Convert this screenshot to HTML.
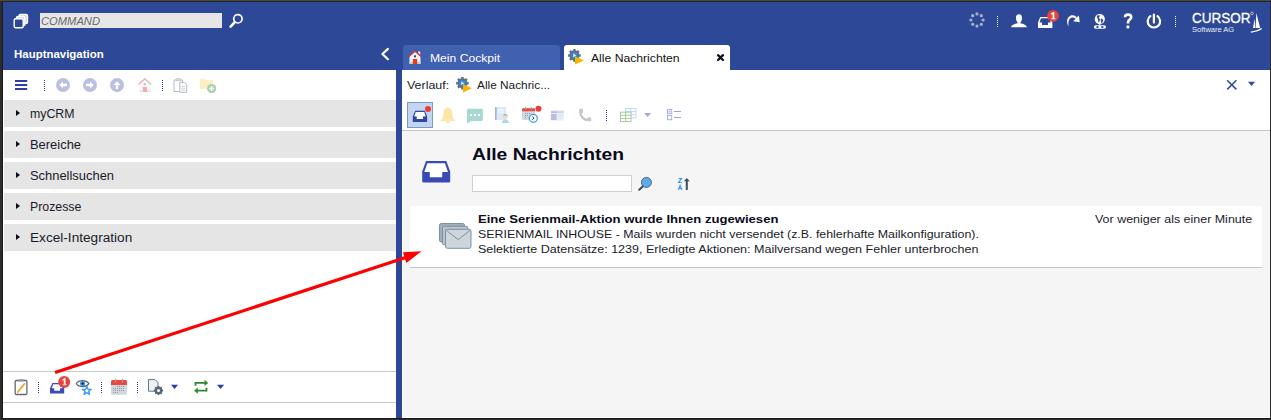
<!DOCTYPE html>
<html><head><meta charset="utf-8">
<style>
*{margin:0;padding:0;box-sizing:border-box}
html,body{width:1271px;height:420px;overflow:hidden;background:#2c2c2c;font-family:"Liberation Sans",sans-serif}
.a{position:absolute}
.t{position:absolute;white-space:nowrap;line-height:1;transform-origin:0 0}
#top0{left:0;top:0;width:1271px;height:1px;background:#4a4a4a}
#blue{left:3px;top:2px;width:1267px;height:416px;background:#2e4898}
#lp{left:3px;top:70px;width:393px;height:348px;background:#fff}
#rp{left:402px;top:70px;width:868px;height:348px;background:#f5f5f5;border-left:1px solid #fff;border-bottom:1px solid #fff}
.row{position:absolute;left:4px;width:392px;height:27px;background:#e5e5e5}
.row .tri{position:absolute;left:12px;top:9.6px;width:0;height:0;border-top:3.9px solid transparent;border-bottom:3.9px solid transparent;border-left:4.8px solid #0a0a1a}
.nv{font-size:12.5px;color:#1a1a2a;left:30px}
.ct{font-size:11px;color:#1a1a2a}
</style></head>
<body>
<div id="top0" class="a"></div>
<div class="a" style="left:2px;top:1px;width:1px;height:418px;background:#1b1b1b"></div>
<div class="a" style="left:2px;top:418px;width:1269px;height:1px;background:#1b1b1b"></div>
<div class="a" style="left:2px;top:1px;width:1269px;height:1px;background:#252520"></div>
<div id="blue" class="a"></div>

<!-- command box -->
<div class="a" style="left:40px;top:13px;width:182px;height:15px;background:#e6e6e6"></div>
<div class="t" style="left:41px;top:16px;font-size:11.5px;font-style:italic;color:#6a6a6a;transform:scaleX(0.972)">COMMAND</div>

<div class="t" style="left:13.5px;top:48.5px;font-size:11px;font-weight:bold;color:#fff;transform:scaleX(1.041)">Hauptnavigation</div>

<!-- left panel -->
<div id="lp" class="a"></div>
<div class="row" style="top:100px"><div class="tri"></div></div>
<div class="row" style="top:131px"><div class="tri"></div></div>
<div class="row" style="top:162px"><div class="tri"></div></div>
<div class="row" style="top:193px"><div class="tri"></div></div>
<div class="row" style="top:224px"><div class="tri"></div></div>
<div class="t nv" style="top:108.2px;transform:scaleX(0.986)">myCRM</div>
<div class="t nv" style="top:139.2px;transform:scaleX(1.034)">Bereiche</div>
<div class="t nv" style="top:170.2px;transform:scaleX(1.033)">Schnellsuchen</div>
<div class="t nv" style="top:201.2px;transform:scaleX(0.986)">Prozesse</div>
<div class="t nv" style="top:232.2px;transform:scaleX(1.090)">Excel-Integration</div>
<div class="a" style="left:3px;top:371px;width:393px;height:1px;background:#c8c8c8"></div>
<div class="a" style="left:3px;top:402px;width:393px;height:1px;background:#c8c8c8"></div>

<!-- tabs -->
<div class="a" style="left:403px;top:45px;width:157px;height:25px;background:#4060b0;border-radius:3px 3px 0 0"></div>
<div class="t" style="left:429.7px;top:53.2px;font-size:11px;color:#fff;transform:scaleX(1.104)">Mein Cockpit</div>
<div class="a" style="left:564px;top:45px;width:166px;height:26px;background:#fff;border-radius:3px 3px 0 0"></div>
<div class="t ct" style="left:590.7px;top:52.7px;color:#111;transform:scaleX(1.106)">Alle Nachrichten</div>

<!-- right panel -->
<div id="rp" class="a"></div>
<div class="a" style="left:402px;top:70px;width:868px;height:61px;background:#fff"></div>
<div class="a" style="left:402px;top:130px;width:868px;height:1px;background:#c8c8c8"></div>
<div class="t ct" style="left:407.4px;top:80px;font-size:11.5px;transform:scaleX(1.082)">Verlauf:</div>
<div class="t ct" style="left:477px;top:80px;font-size:11.5px;transform:scaleX(1.029)">Alle Nachric...</div>

<div class="t" style="left:472.4px;top:145.8px;font-size:16.5px;font-weight:bold;color:#0a0a1a;transform:scaleX(1.167)">Alle Nachrichten</div>
<div class="a" style="left:472px;top:175px;width:160px;height:17px;background:#fff;border:1px solid #d0d0d0"></div>

<!-- card -->
<div class="a" style="left:410px;top:206px;width:852px;height:62px;background:#fff;border-bottom:1px solid #c4c4c4"></div>
<div class="t ct" style="left:477.7px;top:213.6px;font-weight:bold;color:#0a0a1a;transform:scaleX(1.190)">Eine Serienmail-Aktion wurde Ihnen zugewiesen</div>
<div class="t ct" style="left:477.7px;top:228.5px;transform:scaleX(1.125)">SERIENMAIL INHOUSE - Mails wurden nicht versendet (z.B. fehlerhafte Mailkonfiguration).</div>
<div class="t ct" style="left:477.7px;top:243.5px;transform:scaleX(1.140)">Selektierte Datensätze: 1239, Erledigte Aktionen: Mailversand wegen Fehler unterbrochen</div>
<div class="t ct" style="left:1094.6px;top:213.7px;transform:scaleX(1.132)">Vor weniger als einer Minute</div>

<!-- ICONS -->

<svg class="a" style="left:0;top:0" width="1271" height="420" viewBox="0 0 1271 420">
<!-- header: window stack -->
<g stroke="#fff" stroke-width="1.4" stroke-linejoin="round">
<rect x="19" y="14.5" width="8.5" height="9" rx="1.5" fill="#c9cee8"/>
<rect x="16.5" y="16.5" width="8.5" height="9" rx="1.5" fill="#c9cee8"/>
<rect x="14.2" y="18.7" width="9" height="9" rx="1.5" fill="#2e4898"/>
</g>
<!-- header: magnifier -->
<circle cx="237.9" cy="18.8" r="4.2" fill="none" stroke="#fff" stroke-width="1.7"/>
<line x1="234.6" y1="22.3" x2="230.6" y2="26.6" stroke="#fff" stroke-width="2.6" stroke-linecap="round"/>
<!-- spinner -->
<g fill="#aab0c8">
<circle cx="977" cy="13.9" r="1.6"/><circle cx="981.3" cy="15.7" r="1.6"/><circle cx="983.1" cy="20" r="1.6"/><circle cx="981.3" cy="24.3" r="1.6"/>
<circle cx="977" cy="26.1" r="1.6"/><circle cx="972.7" cy="24.3" r="1.6"/><circle cx="970.9" cy="20" r="1.6"/><circle cx="972.7" cy="15.7" r="1.6"/>
</g>
<!-- dotted separators header -->
<g fill="#fff">
<rect x="997" y="16" width="1" height="1"/><rect x="997" y="18" width="1" height="1"/><rect x="997" y="20" width="1" height="1"/><rect x="997" y="22" width="1" height="1"/><rect x="997" y="24" width="1" height="1"/><rect x="997" y="26" width="1" height="1"/>
<rect x="1175" y="16" width="1" height="1"/><rect x="1175" y="18" width="1" height="1"/><rect x="1175" y="20" width="1" height="1"/><rect x="1175" y="22" width="1" height="1"/><rect x="1175" y="24" width="1" height="1"/><rect x="1175" y="26" width="1" height="1"/>
</g>
<!-- person -->
<path fill="#fff" d="M1019,14.2 C1021.2,14.2 1022.1,16 1022,18.2 C1021.9,20.3 1021,21.8 1020.3,22.6 L1020.4,23.3 C1023.5,24 1026.7,25 1026.8,27.3 L1011.1,27.3 C1011.3,25 1014.5,24 1017.6,23.3 L1017.7,22.6 C1017,21.8 1016.1,20.3 1016,18.2 C1015.9,16 1016.8,14.2 1019,14.2 Z"/>
<!-- inbox header -->
<path fill="#fff" d="M1040.2,17 L1050,17 L1052.4,22.5 L1052.4,28 L1038,28 L1038,22.5 Z M1041,18.3 L1039.5,22.5 L1042,22.5 L1042,25 L1048,25 L1048,22.5 L1050.8,22.5 L1049.2,18.3 Z" fill-rule="evenodd"/>
<circle cx="1053" cy="15.9" r="5.9" fill="#e8433a"/>
<path fill="#fff" d="M1051.2,13.2 L1053.6,12 L1054.3,12 L1054.3,18.2 L1055.4,18.2 L1055.4,19.3 L1051.4,19.3 L1051.4,18.2 L1052.6,18.2 L1052.6,14.2 L1051.2,14.7 Z"/>
<!-- redo arrow -->
<path fill="#fff" d="M1068.6,26.4 C1066.4,23 1066.2,17.6 1070.8,15.6 C1073.2,14.8 1075.4,15.6 1076.8,17.4 L1075.4,18.8 C1074.4,17.6 1072.8,17.2 1071.4,17.7 C1068.4,18.8 1068.2,22.6 1068.6,26.4 Z"/>
<path fill="#fff" d="M1078.8,15.6 L1079.8,22.2 L1073.2,21.2 Z"/>
<!-- globe -->
<circle cx="1099.8" cy="19.1" r="5.1" fill="#fff"/>
<path fill="#2e4898" d="M1097.6,15.3 C1096.3,16.4 1096.9,17.6 1097.6,18.4 C1098.2,19.2 1097.9,20.6 1098.4,22 L1099,22.6 C1099.2,21.4 1099.9,20.6 1100.1,19.6 C1100.2,18.8 1099.1,18.7 1098.8,17.8 C1099.2,17 1099.9,16.4 1099.6,15.2 Z"/>
<path fill="#2e4898" d="M1101.2,18.4 C1102.2,18.6 1103.4,19.2 1103.2,20.4 C1103,21.4 1102.4,22.2 1101.8,23.2 L1101.2,23.4 C1101.4,22.2 1100.9,21.4 1100.8,20.5 C1100.7,19.6 1100.9,18.9 1101.2,18.4 Z"/>
<rect x="1099.3" y="24" width="1" height="1.5" fill="#fff"/>
<rect x="1093.9" y="25.3" width="12.1" height="3.4" rx="1.7" fill="#fff"/>
<path fill="#2e4898" d="M1095.8,27 L1097.2,26.1 L1098.4,26.1 L1098.4,27.9 L1097.2,27.9 Z M1104,27 L1102.6,26.1 L1101.4,26.1 L1101.4,27.9 L1102.6,27.9 Z"/>
<!-- question -->
<path fill="none" stroke="#fff" stroke-width="2.6" d="M1125,17.2 C1125,15.2 1126.3,14.6 1128,14.6 C1130,14.6 1131.2,15.6 1131.2,17.3 C1131.2,19.5 1128,19.8 1128,22.2 L1128,23.6"/>
<circle cx="1127.9" cy="26.9" r="1.6" fill="#fff"/>
<!-- power -->
<path fill="none" stroke="#fff" stroke-width="2.2" stroke-linecap="round" d="M1150.34,16.2 A6.2,6.2 0 1 0 1157.46,16.2"/>
<line x1="1153.9" y1="14.6" x2="1153.9" y2="22.6" stroke="#fff" stroke-width="2.2" stroke-linecap="round"/>
<!-- sailboat -->
<path fill="#fff" d="M1256.3,13 L1260.2,28 L1255.6,28 Z M1254.6,18.5 L1255.2,28 L1253,28 Z"/>
<path fill="none" stroke="#fff" stroke-width="1.3" d="M1250.8,32.2 C1255,31.5 1259,30.5 1261.7,28.5"/>
<circle cx="1252" cy="13.4" r="1.3" fill="none" stroke="#fff" stroke-width="0.6"/>
<!-- chevron -->
<path fill="none" stroke="#fff" stroke-width="2.2" stroke-linecap="round" stroke-linejoin="round" d="M387.9,48.9 L382.4,54 L387.9,59.2"/>
<!-- house tab -->
<rect x="418" y="51.5" width="2.2" height="4" fill="#e8eaf4"/>
<path fill="#f4f5fa" d="M409.5,56.5 L415,51.5 L420.5,56.5 L420.5,63.8 L409.5,63.8 Z"/>
<rect x="409.5" y="61.8" width="11" height="2" fill="#c9cde6"/>
<path fill="none" stroke="#c23a40" stroke-width="1.5" d="M408.6,56.8 L415,50.9 L421.4,56.8"/>
<rect x="414" y="55.3" width="2" height="2" fill="#1a4a90"/>
<rect x="412.8" y="59" width="4.4" height="5" fill="#e2410f"/>
<!-- gear tab -->
<g id="gearico">
<path fill="#5d7282" d="M573.14,50.56 L573.15,49.12 L575.65,49.12 L575.66,50.56 L576.93,51.09 L577.96,50.08 L579.72,51.84 L578.71,52.87 L579.24,54.14 L580.68,54.15 L580.68,56.65 L579.24,56.66 L578.71,57.93 L579.72,58.96 L577.96,60.72 L576.93,59.71 L575.66,60.24 L575.65,61.68 L573.15,61.68 L573.14,60.24 L571.87,59.71 L570.84,60.72 L569.08,58.96 L570.09,57.93 L569.56,56.66 L568.12,56.65 L568.12,54.15 L569.56,54.14 L570.09,52.87 L569.08,51.84 L570.84,50.08 L571.87,51.09 Z"/>
<circle cx="574.4" cy="55.4" r="3.1" fill="#2f8ae6"/>
<path fill="#fff" d="M573.3,53.6 L576.1,55.4 L573.3,57.2 Z"/>
<path fill="#f6b500" d="M575,56.2 L583.9,60.4 L575,64.6 Z"/>
</g>
<!-- tab close x -->
<path stroke="#0d0d1f" stroke-width="2.3" stroke-linecap="round" d="M718,55.2 L723,60 M723,55.2 L718,60"/>
</svg>
<div class="t" style="left:1191.5px;top:10px;font-size:15px;color:#fff;-webkit-text-stroke:0.3px #fff;transform:scaleX(0.9)">CURSOR</div>
<div class="t" style="left:1191.5px;top:25.9px;font-size:8px;color:#e8ecf6;transform:scaleX(0.94)">Software AG</div>
<svg class="a" style="left:0;top:0" width="1271" height="420" viewBox="0 0 1271 420">
<!-- left toolbar -->
<g fill="#2b3fa8"><rect x="15" y="80" width="12.2" height="2"/><rect x="15" y="84" width="12.2" height="2"/><rect x="15" y="88" width="12.2" height="2"/></g>
<g fill="#2a3a90">
<rect x="44" y="80" width="1" height="1"/><rect x="44" y="82" width="1" height="1"/><rect x="44" y="84" width="1" height="1"/><rect x="44" y="86" width="1" height="1"/><rect x="44" y="88" width="1" height="1"/><rect x="44" y="90" width="1" height="1"/>
<rect x="162" y="80" width="1" height="1"/><rect x="162" y="82" width="1" height="1"/><rect x="162" y="84" width="1" height="1"/><rect x="162" y="86" width="1" height="1"/><rect x="162" y="88" width="1" height="1"/><rect x="162" y="90" width="1" height="1"/>
</g>
<g fill="#b9c0e4"><circle cx="63" cy="85" r="7"/><circle cx="90" cy="85" r="7"/><circle cx="117" cy="85" r="7"/></g>
<g fill="#fff">
<path d="M59.3,85 L63,81.6 L63,83.8 L67,83.8 L67,86.2 L63,86.2 L63,88.4 Z"/>
<path d="M93.7,85 L90,81.6 L90,83.8 L86,83.8 L86,86.2 L90,86.2 L90,88.4 Z"/>
<path d="M117,81.3 L120.4,85 L118.2,85 L118.2,89 L115.8,89 L115.8,85 L113.6,85 Z"/>
</g>
<!-- faded house -->
<path fill="#f6f6fb" d="M139.5,84.5 L144.8,79.5 L150.5,84.5 L150.5,91.8 L139.5,91.8 Z"/>
<rect x="139.5" y="90" width="11" height="1.8" fill="#e2e5f3"/>
<path fill="none" stroke="#eeb4b4" stroke-width="1.4" d="M138.5,84.6 L144.8,78.8 L151.2,84.6"/>
<rect x="143.8" y="83.2" width="2" height="2" fill="#9fc0dc"/>
<rect x="142.8" y="87" width="4.2" height="5" fill="#eeb0a0"/>
<!-- clipboard copy -->
<path fill="#fff" stroke="#b4bcc4" stroke-width="1" d="M174,80 h8.5 v11.5 h-8.5 Z"/>
<rect x="176" y="78.6" width="4.5" height="2.2" rx="0.5" fill="#d8dce0" stroke="#b4bcc4" stroke-width="0.6"/>
<path fill="#fff" stroke="#b4bcc4" stroke-width="1" d="M179.8,82.3 h4.5 l2.4,2.4 v7.6 h-6.9 Z"/>
<g stroke="#c4cad0" stroke-width="0.8"><line x1="181.3" y1="86.5" x2="185.3" y2="86.5"/><line x1="181.3" y1="88.3" x2="185.3" y2="88.3"/><line x1="181.3" y1="90.1" x2="185.3" y2="90.1"/></g>
<!-- folder plus -->
<path fill="#fdeec4" d="M199.8,79.5 q0,-0.7 0.7,-0.7 h3.8 l1.2,1.3 h7 q0.5,0 0.5,0.6 v8.3 h-13.2 Z"/>
<circle cx="211.6" cy="88.5" r="4.6" fill="#a9d3aa"/>
<path stroke="#fff" stroke-width="1.4" d="M209.1,88.5 h5 M211.6,86 v5"/>

<!-- bottom toolbar -->
<!-- clipboard pencil -->
<rect x="15.2" y="380.5" width="11.7" height="14" rx="1.2" fill="#fff" stroke="#5f6b76" stroke-width="1.3"/>
<rect x="18.5" y="379.2" width="5.2" height="2.4" rx="0.6" fill="#8a96a0"/>
<path stroke="#f0a020" stroke-width="1.8" stroke-linecap="round" d="M17.8,392 L24.2,384.2"/>
<path stroke="#f0a0a0" stroke-width="1.8" d="M24.2,384.2 L25,383.2"/>
<g fill="#2a3a90">
<rect x="38" y="382" width="1" height="1"/><rect x="38" y="384" width="1" height="1"/><rect x="38" y="386" width="1" height="1"/><rect x="38" y="388" width="1" height="1"/><rect x="38" y="390" width="1" height="1"/><rect x="38" y="392" width="1" height="1"/>
<rect x="101" y="382" width="1" height="1"/><rect x="101" y="384" width="1" height="1"/><rect x="101" y="386" width="1" height="1"/><rect x="101" y="388" width="1" height="1"/><rect x="101" y="390" width="1" height="1"/><rect x="101" y="392" width="1" height="1"/>
<rect x="137" y="382" width="1" height="1"/><rect x="137" y="384" width="1" height="1"/><rect x="137" y="386" width="1" height="1"/><rect x="137" y="388" width="1" height="1"/><rect x="137" y="390" width="1" height="1"/><rect x="137" y="392" width="1" height="1"/>
</g>
<!-- inbox blue small -->
<path fill="#3a4ab8" fill-rule="evenodd" d="M52.5,383 L62,383 L64.2,388.3 L64.2,393 q0,0.6 -0.6,0.6 L50.6,393.6 q-0.6,0 -0.6,-0.6 L50,388.3 Z M53.3,384.3 L51.6,388.3 L54.2,388.3 L54.2,390.8 L60,390.8 L60,388.3 L62.6,388.3 L61.1,384.3 Z"/>
<circle cx="64.2" cy="381.9" r="6" fill="#e8433a"/>
<path fill="#fff" d="M62.4,379.2 L64.8,378 L65.5,378 L65.5,384.2 L66.6,384.2 L66.6,385.3 L62.6,385.3 L62.6,384.2 L63.8,384.2 L63.8,380.2 L62.4,380.7 Z"/>
<!-- eye star -->
<path fill="none" stroke="#5a6670" stroke-width="1.1" d="M76.3,383.6 C79,379.6 86,379.6 89,383.6 C86,387.6 79,387.6 76.3,383.6 Z"/>
<circle cx="82.6" cy="383.6" r="2.6" fill="#3a9af0"/>
<circle cx="82.6" cy="383.6" r="1.1" fill="#111"/>
<path fill="#fff" stroke="#3a9af0" stroke-width="1.4" stroke-linejoin="round" d="M86.8,386.4 L88,389.3 L91.1,389.4 L88.7,391.3 L89.5,394.3 L86.8,392.6 L84.1,394.3 L84.9,391.3 L82.5,389.4 L85.6,389.3 Z"/>
<!-- calendar -->
<rect x="111" y="380" width="16" height="14.8" rx="1.5" fill="#d1d8de"/>
<path fill="#ec4840" d="M111,381.5 q0,-1.5 1.5,-1.5 h13 q1.5,0 1.5,1.5 v3.6 h-16 Z"/>
<g fill="#9aa4ac"><rect x="115" y="378.8" width="1.2" height="3.5"/><rect x="121.8" y="378.8" width="1.2" height="3.5"/></g>
<g fill="#8f99a3"><rect x="117" y="386" width="1" height="1"/><rect x="119" y="386" width="1" height="1"/><rect x="121" y="386" width="1" height="1"/><rect x="123" y="386" width="1" height="1"/><rect x="113" y="388" width="1" height="1"/><rect x="115" y="388" width="1" height="1"/><rect x="117" y="388" width="1" height="1"/><rect x="119" y="388" width="1" height="1"/><rect x="121" y="388" width="1" height="1"/><rect x="123" y="388" width="1" height="1"/><rect x="113" y="390" width="1" height="1"/><rect x="115" y="390" width="1" height="1"/><rect x="117" y="390" width="1" height="1"/><rect x="119" y="390" width="1" height="1"/><rect x="121" y="390" width="1" height="1"/><rect x="123" y="390" width="1" height="1"/><rect x="113" y="392" width="1" height="1"/><rect x="115" y="392" width="1" height="1"/><rect x="117" y="392" width="1" height="1"/></g>
<!-- doc gear -->
<path fill="#eef2f8" stroke="#637482" stroke-width="1" d="M148.5,379.6 h6.5 l3,3 v8.6 h-9.5 Z"/>
<path fill="#546674" d="M157.57,386.92 L157.58,385.89 L159.42,385.89 L159.43,386.92 L160.37,387.31 L161.11,386.59 L162.41,387.89 L161.69,388.63 L162.08,389.57 L163.11,389.58 L163.11,391.42 L162.08,391.43 L161.69,392.37 L162.41,393.11 L161.11,394.41 L160.37,393.69 L159.43,394.08 L159.42,395.11 L157.58,395.11 L157.57,394.08 L156.63,393.69 L155.89,394.41 L154.59,393.11 L155.31,392.37 L154.92,391.43 L153.89,391.42 L153.89,389.58 L154.92,389.57 L155.31,388.63 L154.59,387.89 L155.89,386.59 L156.63,387.31 Z"/>
<circle cx="158.5" cy="390.5" r="1.5" fill="#fff"/>
<g fill="#2a3f9e"><path d="M171,384.7 h7.1 l-3.55,4.2 Z"/><path d="M217,384.7 h7.1 l-3.55,4.2 Z"/></g>
<!-- green arrows -->
<g fill="none" stroke="#2a8a30" stroke-width="1.8">
<path d="M195.5,385.8 v-2.9 h10"/><path d="M206.5,387.7 v3 h-10"/>
</g>
<g fill="#2a8a30"><path d="M204.5,379.8 L208.2,382.9 L204.5,386 Z"/><path d="M197.8,387.6 L194.1,390.7 L197.8,393.8 Z"/></g>
</svg>
<svg class="a" style="left:0;top:0" width="1271" height="420" viewBox="0 0 1271 420">
<!-- verlauf gear -->
<g transform="translate(-112,27.8)">
<path fill="#5d7282" d="M573.14,50.56 L573.15,49.12 L575.65,49.12 L575.66,50.56 L576.93,51.09 L577.96,50.08 L579.72,51.84 L578.71,52.87 L579.24,54.14 L580.68,54.15 L580.68,56.65 L579.24,56.66 L578.71,57.93 L579.72,58.96 L577.96,60.72 L576.93,59.71 L575.66,60.24 L575.65,61.68 L573.15,61.68 L573.14,60.24 L571.87,59.71 L570.84,60.72 L569.08,58.96 L570.09,57.93 L569.56,56.66 L568.12,56.65 L568.12,54.15 L569.56,54.14 L570.09,52.87 L569.08,51.84 L570.84,50.08 L571.87,51.09 Z"/>
<circle cx="574.4" cy="55.4" r="3.1" fill="#2f8ae6"/>
<path fill="#fff" d="M573.3,53.6 L576.1,55.4 L573.3,57.2 Z"/>
<path fill="#f6b500" d="M575,56.2 L583.9,60.4 L575,64.6 Z"/>
</g>
<!-- close x & dropdown right -->
<path stroke="#2e49a8" stroke-width="1.5" d="M1227.2,80.2 L1236.4,89.4 M1236.4,80.2 L1227.2,89.4"/>
<path fill="#2e49a8" d="M1248,81.8 h7.1 l-3.55,4.2 Z"/>
<!-- selected button -->
<rect x="407.5" y="102.5" width="25" height="25" fill="#c4d5f1" stroke="#7f98cc" stroke-width="1"/>
<path fill="#2f47a8" fill-rule="evenodd" d="M415.2,110.8 L424.8,110.8 L427.1,116.3 L427.1,121.4 q0,0.6 -0.6,0.6 L413.4,122 q-0.6,0 -0.6,-0.6 L412.8,116.3 Z M415.9,112.1 L414.2,116.3 L416.8,116.3 L416.8,119 L423,119 L423,116.3 L425.6,116.3 L424.1,112.1 Z"/>
<path fill="#fff" d="M415.9,112.1 L414.2,116.3 L416.8,116.3 L416.8,119 L423,119 L423,116.3 L425.6,116.3 L424.1,112.1 Z"/>
<circle cx="428" cy="109" r="3" fill="#ee3b34"/>
<!-- bell -->
<path fill="#fde6a4" d="M447.8,106.8 q0.8,0 0.8,0.9 C451.5,108.5 452.2,111 452.3,114 C452.4,117.5 453.5,119 455.2,120.6 L455.2,121.3 L440.5,121.3 L440.5,120.6 C442.2,119 443.3,117.5 443.4,114 C443.5,111 444.2,108.5 447,107.7 q0,-0.9 0.8,-0.9 Z"/>
<path fill="#f6d890" d="M446,121.6 h3.7 q-0.4,1.5 -1.85,1.5 q-1.45,0 -1.85,-1.5 Z"/>
<path stroke="#fff3d0" stroke-width="0.6" fill="none" d="M442,119.8 h11.8"/>
<!-- chat -->
<path fill="#a7d9d1" d="M468.3,108.8 h13.2 q1.4,0 1.4,1.4 v9.4 q0,1.4 -1.4,1.4 h-10.6 l-3.9,3 v-3 h0 q-0.1,0 -0.1,-0.1 Z" />
<path fill="#a7d9d1" d="M466.9,110.2 q0,-1.4 1.4,-1.4 h2 v12 h-2 q-1.4,0 -1.4,-1.4 Z"/>
<g fill="#fff"><rect x="470" y="114" width="2" height="2"/><rect x="474" y="114" width="2" height="2"/><rect x="478" y="114" width="2" height="2"/></g>
<!-- doc person -->
<rect x="495.5" y="107" width="10.7" height="13" fill="#d9e9fa"/>
<rect x="495" y="107" width="1.6" height="13" fill="#a9b5c1"/>
<g fill="#fff"><rect x="498" y="109.5" width="6" height="1"/><rect x="498" y="111.7" width="6" height="0.9"/></g>
<path fill="#a9daf3" d="M502,123 q0,-3 3.4,-3.4 q3.4,0.4 3.4,3.4 Z"/>
<circle cx="505.4" cy="116.7" r="2.2" fill="#f6dcb4"/>
<path fill="#9aa0a8" d="M503.2,116.4 q0,-2.5 2.2,-2.5 q2.2,0 2.2,2.5 q-1,-1.2 -2.2,-1.2 q-1.2,0 -2.2,1.2 Z"/>
<!-- calendar clock -->
<rect x="522" y="108.2" width="13" height="11.7" rx="1.2" fill="#d2d8de"/>
<path fill="#ec4840" d="M522,109.4 q0,-1.2 1.2,-1.2 h10.6 q1.2,0 1.2,1.2 v1.9 h-13 Z"/>
<g fill="#9aa4ac"><rect x="525" y="107" width="1" height="2.8"/><rect x="530.8" y="107" width="1" height="2.8"/></g>
<g fill="#8e98a2"><rect x="525" y="113" width="1" height="1"/><rect x="527" y="113" width="1" height="1"/><rect x="529" y="113" width="1" height="1"/><rect x="525" y="115" width="1" height="1"/><rect x="527" y="115" width="1" height="1"/><rect x="525" y="117" width="1" height="1"/></g>
<circle cx="533.3" cy="118.3" r="4" fill="#fff" stroke="#3a9ae8" stroke-width="1.2"/>
<path fill="none" stroke="#222" stroke-width="0.9" d="M532.3,116.6 L534.1,118.2 L532.3,119.6"/>
<circle cx="538.5" cy="108.8" r="3" fill="#ee3b34"/>
<!-- newspaper -->
<rect x="550.4" y="110" width="13.6" height="10.8" fill="#eef0f4"/>
<rect x="551" y="111.2" width="6" height="1.8" fill="#b8b8e2"/>
<rect x="557" y="111.2" width="6.4" height="1.8" fill="#aee0f6"/>
<rect x="551" y="114" width="5.6" height="6" fill="#b9bbe3"/>
<g fill="#d8dce2"><rect x="557.6" y="114.5" width="5.6" height="0.8"/><rect x="557.6" y="116.5" width="5.6" height="0.8"/><rect x="557.6" y="118.5" width="4" height="0.8"/></g>
<!-- phone -->
<path fill="#c6c6c6" d="M579.2,110 q0,-1.3 1.3,-1.3 h1.8 q0.6,0 0.6,0.6 v3.4 q0,0.6 -0.6,0.6 h-0.7 C582,116 584,118.2 587.2,119 v-0.8 q0,-0.6 0.6,-0.6 h2.8 q0.6,0 0.6,0.6 v2.2 q0,0.9 -0.9,0.9 h-2.5 C583,121 579.2,117 579.2,112 Z"/>
<g fill="#2a3a90"><rect x="606" y="110" width="1" height="1"/><rect x="606" y="112" width="1" height="1"/><rect x="606" y="114" width="1" height="1"/><rect x="606" y="116" width="1" height="1"/><rect x="606" y="118" width="1" height="1"/><rect x="606" y="120" width="1" height="1"/></g>
<!-- grid icons -->
<g fill="none" stroke="#b9daf6" stroke-width="1"><rect x="625.5" y="108.5" width="10.5" height="9.3"/><path d="M630.7,108.5 v9.3 M625.5,111.6 h10.5 M625.5,114.7 h10.5"/></g>
<rect x="620.5" y="112.2" width="10.5" height="9.3" fill="#fff"/>
<g fill="none" stroke="#a6cda0" stroke-width="1"><rect x="620.5" y="112.2" width="10.5" height="9.3"/><path d="M625.7,112.2 v9.3 M620.5,115.3 h10.5 M620.5,118.4 h10.5"/></g>
<path fill="#a3aad4" d="M644,112.9 h7.1 l-3.55,4.1 Z"/>
<!-- list icon -->
<g fill="none" stroke="#a9b0dd" stroke-width="1"><rect x="667.5" y="109.5" width="4.2" height="4.2"/><rect x="667.5" y="115.5" width="4.2" height="4.2"/></g>
<path stroke="#a9b0dd" stroke-width="0.8" d="M669.6,110.5 v2.2 M668.5,111.6 h2.2"/>
<g stroke="#9da6c4" stroke-width="1"><path d="M674,111.5 h7 M674,117.5 h7"/></g>

<!-- big inbox -->
<path fill="#3a4ab4" d="M426,161 L446.3,161 L450.2,171.5 L450.2,181.2 q0,1.4 -1.4,1.4 L423.6,182.6 q-1.4,0 -1.4,-1.4 L422.2,171.5 Z"/>
<path fill="#fff" d="M427.3,163.2 L444.9,163.2 L448,171.9 L442.2,171.9 L442.2,177.2 L429.8,177.2 L429.8,171.9 L424.3,171.9 Z"/>
<!-- magnifier content -->
<path stroke="#3a4a55" stroke-width="2" stroke-linecap="round" d="M643,186.3 L639.2,189.8"/>
<circle cx="646.4" cy="182.4" r="5" fill="#5aacf2" stroke="#4a4a50" stroke-width="0.8"/>
<!-- sort -->
<path fill="none" stroke="#3a9af0" stroke-width="1.2" d="M678.6,178.5 h3 l-3,4 h3.2"/>
<path fill="none" stroke="#3a9af0" stroke-width="1.2" d="M678.3,189.9 L680.1,185.3 L681.9,189.9 M679,188.3 h2.2"/>
<path fill="#3a5060" d="M686.8,178 L689.8,181.2 L687.8,181.2 L687.8,189.9 L685.8,189.9 L685.8,181.2 L683.8,181.2 Z"/>

<!-- envelope stack -->
<g stroke="#7c919f" stroke-width="1">
<rect x="439.5" y="223.5" width="25" height="18.5" rx="1.8" fill="#9fb0bc"/>
<rect x="442.5" y="226.3" width="25.5" height="18.5" rx="1.8" fill="#b9c6d0"/>
<rect x="445.5" y="229.3" width="25.5" height="19" rx="1.8" fill="#cdd6dd"/>
<path fill="none" d="M446.3,230.3 L458.2,239.6 L470.2,230.3"/>
</g>

<!-- red arrow -->
<line x1="55" y1="372.5" x2="408" y2="256.8" stroke="#ff0000" stroke-width="3.2"/>
<path fill="#ff0000" d="M421.5,251.3 L403,252.2 L406.3,263 Z"/>
</svg>
</body></html>
